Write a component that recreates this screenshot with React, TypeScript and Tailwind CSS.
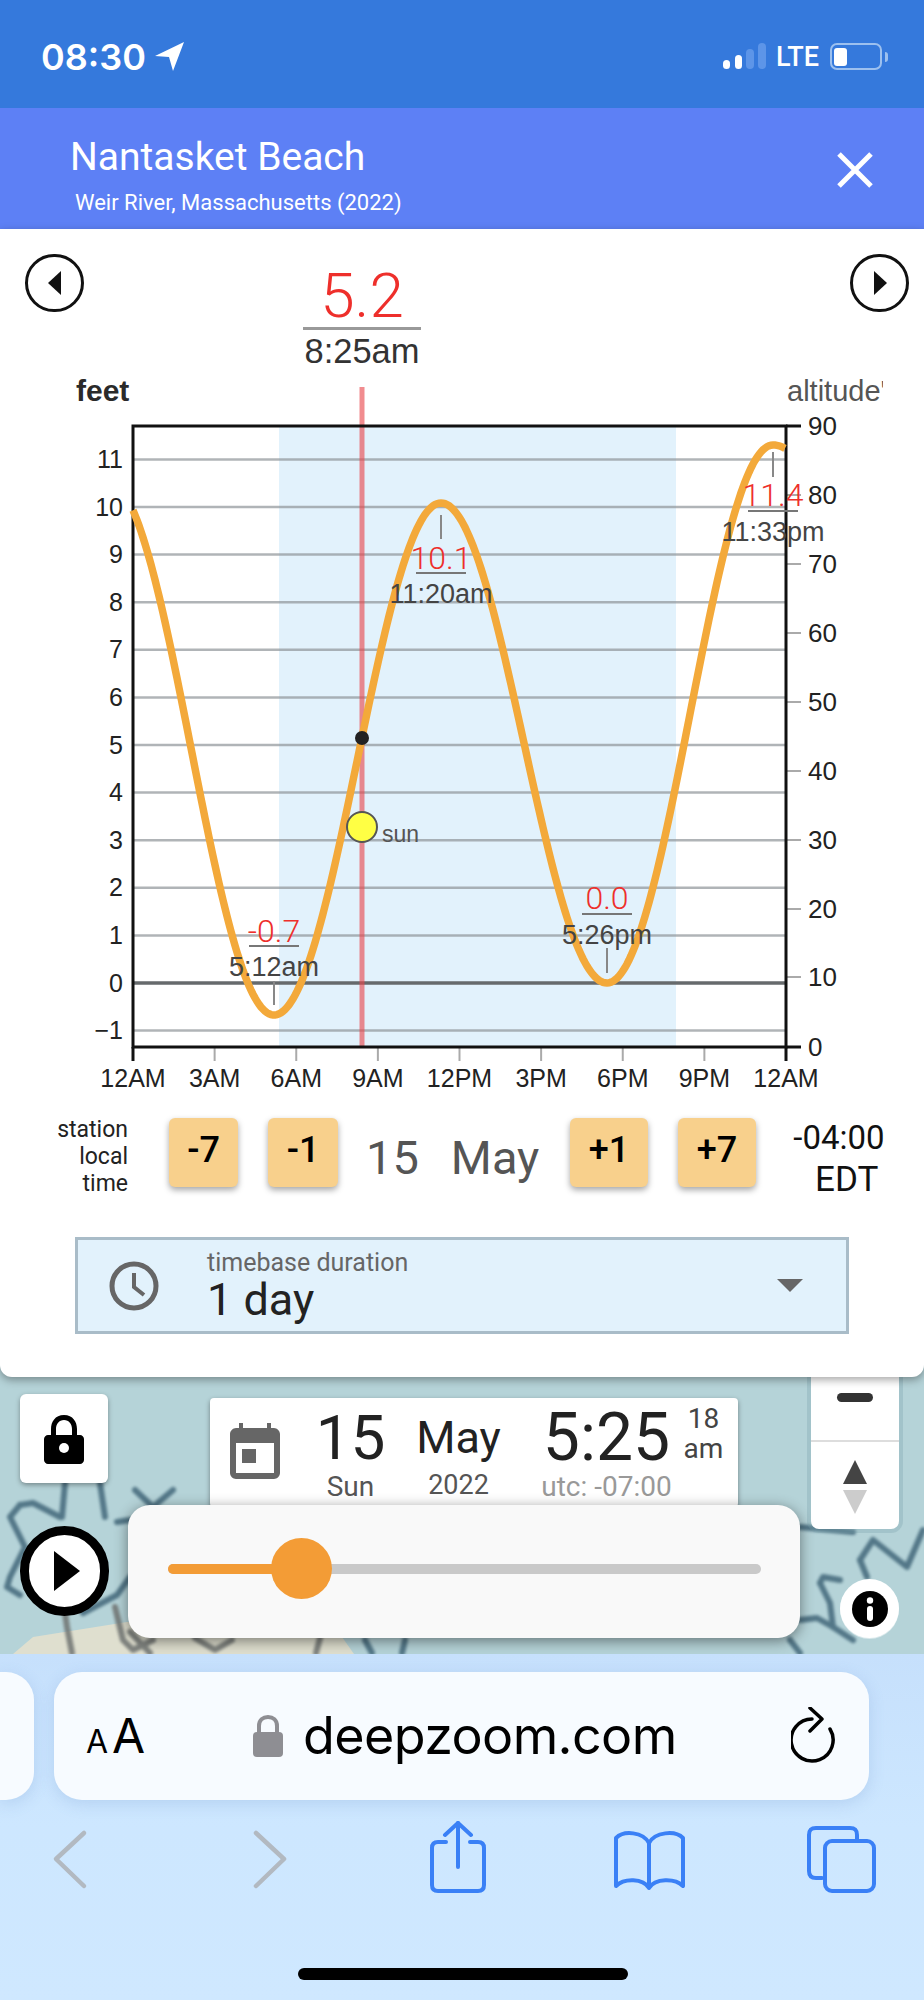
const PLOT = { left: 133, right: 786, top: 426, bottom: 1047 };
const feetY = (v: number) => 983 - 47.6 * v;
const hourX = (h: number) => PLOT.left + (h * (PLOT.right - PLOT.left)) / 24;

// tide extremes in page pixels, the curve is a cosine between each pair
const extremes: [number, number][] = [
  [108, 481],
  [274, 1015],
  [441, 503],
  [607, 983],
  [773, 445],
  [939, 700],
];

function tidePath() {
  const pts: string[] = [];
  for (let x = PLOT.left; x <= PLOT.right; x += 2) {
    const i = extremes.findIndex((e, n) => x >= e[0] && x < extremes[n + 1][0]);
    const [x0, y0] = extremes[i];
    const [x1, y1] = extremes[i + 1];
    const f = (1 - Math.cos((Math.PI * (x - x0)) / (x1 - x0))) / 2;
    pts.push(`${x},${(y0 + (y1 - y0) * f).toFixed(1)}`);
  }
  return `M${pts.join(' L')}`;
}

const feetLabels = [11, 10, 9, 8, 7, 6, 5, 4, 3, 2, 1, 0, -1];
const altLabels = [
  [90, 426],
  [80, 495],
  [70, 564],
  [60, 633],
  [50, 702],
  [40, 771],
  [30, 840],
  [20, 909],
  [10, 977],
  [0, 1047],
];
const timeLabels = ['12AM', '3AM', '6AM', '9AM', '12PM', '3PM', '6PM', '9PM', '12AM'];

const tideLabels = [
  { x: 274, value: '-0.7', time: '5:12am', red: 942, rule: 946, clock: 976, t0: 981, t1: 1005 },
  { x: 441, value: '10.1', time: '11:20am', red: 569, rule: 573, clock: 603, t0: 515, t1: 539 },
  { x: 607, value: '0.0', time: '5:26pm', red: 909, rule: 914, clock: 944, t0: 948, t1: 973 },
  { x: 773, value: '11.4', time: '11:33pm', red: 506, rule: 511, clock: 541, t0: 452, t1: 477 },
];

function TideChart() {
  return (
    <svg viewBox="0 374 924 726" width="924" height="726" className="block font-['Liberation_Sans',sans-serif]">
      <defs>
        <clipPath id="alt-clip">
          <rect x="780" y="374" width="103" height="40" />
        </clipPath>
      </defs>

      <rect x="279" y={PLOT.top} width="397" height={PLOT.bottom - PLOT.top} fill="#e2f2fc" />

      {feetLabels.map((v) => (
        <line
          key={v}
          x1={PLOT.left}
          x2={PLOT.right}
          y1={feetY(v)}
          y2={feetY(v)}
          stroke={v === 0 ? '#666a6c' : '#8f9498'}
          strokeOpacity={v === 0 ? 1 : 0.7}
          strokeWidth={v === 0 ? 3.5 : 2.5}
        />
      ))}

      <line x1="362" x2="362" y1="387" y2={PLOT.bottom} stroke="#e8454a" strokeOpacity="0.62" strokeWidth="5" />

      {timeLabels.map((t, i) => (
        <g key={i}>
          <line
            x1={hourX(i * 3)}
            x2={hourX(i * 3)}
            y1={PLOT.bottom}
            y2={1061}
            stroke={i === 0 || i === 8 ? '#111' : '#aaa'}
            strokeWidth={i === 0 || i === 8 ? 3 : 2}
          />
          <text x={hourX(i * 3)} y="1087" textAnchor="middle" fontSize="25" fill="#222">
            {t}
          </text>
        </g>
      ))}

      {altLabels.map(([v, y]) => (
        <g key={v}>
          <line
            x1={PLOT.right}
            x2="801"
            y1={y}
            y2={y}
            stroke={v === 90 || v === 0 ? '#111' : '#aaa'}
            strokeWidth={v === 90 || v === 0 ? 3 : 2}
          />
          <text x="808" y={y + 9} fontSize="26" fill="#222">
            {v}
          </text>
        </g>
      ))}

      <rect x={PLOT.left} y={PLOT.top} width={PLOT.right - PLOT.left} height={PLOT.bottom - PLOT.top} fill="none" stroke="#111" strokeWidth="3" />

      {feetLabels.map((v) => (
        <text key={v} x="123" y={feetY(v) + 8.5} textAnchor="end" fontSize="25" fill="#222">
          {v < 0 ? `\u2212${-v}` : v}
        </text>
      ))}

      <text x="76" y="401" fontSize="30" fontWeight="700" fill="#2a2a2a">
        feet
      </text>
      <text x="787" y="401" fontSize="29" fill="#555" clipPath="url(#alt-clip)">
        altitude'
      </text>

      <path d={tidePath()} fill="none" stroke="#f3a93a" strokeWidth="7.5" />

      {tideLabels.map((l) => (
        <g key={l.value} textAnchor="middle">
          <line x1={l.x} x2={l.x} y1={l.t0} y2={l.t1} stroke="#888" strokeWidth="2" />
          <text x={l.x} y={l.red} fontSize="32" fontWeight="300" fill="#ee2f2b" className="font-['Roboto',sans-serif]">
            {l.value}
          </text>
          <line x1={l.x - 25} x2={l.x + 25} y1={l.rule} y2={l.rule} stroke="#777" strokeWidth="2" />
          <text x={l.x} y={l.clock} fontSize="27" fill="#444">
            {l.time}
          </text>
        </g>
      ))}

      <circle cx="362" cy="738" r="7" fill="#222" />
      <circle cx="362" cy="827" r="15" fill="#ffff44" stroke="#555" strokeWidth="2" />
      <text x="382" y="842" fontSize="23" fill="#555">
        sun
      </text>
    </svg>
  );
}

function NavButton({ dir }: { dir: 'left' | 'right' }) {
  return (
    <button className="flex h-[58px] w-[59px] items-center justify-center rounded-full border-[3px] border-[#111] bg-white">
      <svg width="14" height="24" viewBox="0 0 14 24">
        <path d={dir === 'left' ? 'M13 0 L13 24 L0 12 Z' : 'M1 0 L1 24 L14 12 Z'} fill="#111" />
      </svg>
    </button>
  );
}

function StepButton({ label, width, gap }: { label: string; width: string; gap: string }) {
  return (
    <button
      className={`${width} ${gap} flex h-[69px] shrink-0 items-center justify-center rounded-md bg-[#f8d08c] pb-[6px] text-[36px] font-medium text-black shadow-[0_3px_6px_rgba(0,0,0,0.35)]`}
    >
      {label}
    </button>
  );
}

function MapBackdrop() {
  const blue = [
    'M65 1483 L62 1517',
    'M20 1505 L33 1503 L60 1517',
    'M20 1505 L10 1517 L25 1547 L10 1577 L7 1587 L20 1595',
    'M100 1483 L105 1517',
    'M135 1490 L153 1507 L173 1490',
    'M117 1522 L130 1520',
    'M83 1613 L117 1595 L130 1577',
    'M800 1527 L853 1532',
    'M860 1560 L873 1540 L907 1567 L923 1530',
    'M860 1560 L867 1577',
    'M820 1583 L823 1577 L840 1580',
    'M820 1583 L830 1603 L833 1627 L853 1640',
    'M800 1620 L817 1618 L833 1627',
    'M790 1640 L800 1653',
    'M365 1640 L372 1653',
    'M405 1640 L402 1653',
  ];
  const grey = [
    'M65 1613 L67 1627 L72 1653',
    'M115 1607 L123 1640 L133 1650 L153 1640',
    'M130 1632 L150 1653',
    'M195 1638 L215 1650 L232 1640',
    'M320 1638 L316 1653',
  ];
  return (
    <svg viewBox="0 1365 924 289" className="absolute inset-0 h-full w-full">
      <rect x="0" y="1365" width="924" height="289" fill="#b5d3d8" />
      <path d="M13 1654 L33 1637 L127 1622 L330 1620 L354 1654 Z" fill="#dfdfcf" />
      <g fill="none" strokeWidth="6" strokeLinejoin="round" strokeLinecap="round" opacity="0.85" className="blur-[1.5px]">
        {blue.map((d) => (
          <path key={d} d={d} stroke="#42677a" />
        ))}
        {grey.map((d) => (
          <path key={d} d={d} stroke="#6f7371" />
        ))}
      </g>
    </svg>
  );
}

function MapOverlays() {
  return (
    <>
      <div className="absolute left-[20px] top-[29px] flex h-[89px] w-[88px] items-center justify-center rounded-md bg-white shadow-[0_2px_5px_rgba(0,0,0,0.35)]">
        <svg width="40" height="52" viewBox="0 0 40 52">
          <path
            d="M20 2 C11 2 7 9 7 16 V22 H4 C2 22 0 24 0 26 V47 C0 49 2 51 4 51 H36 C38 51 40 49 40 47 V26 C40 24 38 22 36 22 H33 V16 C33 9 29 2 20 2 Z M12 22 V16 C12 11 15 7 20 7 C25 7 28 11 28 16 V22 Z"
            fill="#000"
            fillRule="evenodd"
          />
          <circle cx="20" cy="35" r="5" fill="#fff" />
        </svg>
      </div>

      <div className="absolute left-[210px] top-[33px] flex h-[109px] w-[528px] rounded bg-white shadow-[0_2px_5px_rgba(0,0,0,0.4)]">
        <svg width="50" height="56" viewBox="0 0 50 56" className="ml-[20px] mt-[25px] shrink-0">
          <path
            d="M9 0 H13 V5 H37 V0 H41 V5 H44 C47 5 50 8 50 11 V50 C50 53 47 56 44 56 H6 C3 56 0 53 0 50 V11 C0 8 3 5 6 5 H9 Z M6 20 V50 H44 V20 Z"
            fill="#666"
            fillRule="evenodd"
          />
          <rect x="12" y="26" width="14" height="14" fill="#666" />
        </svg>
        <div className="ml-[38px] flex w-[65px] flex-col items-center">
          <span className="mt-[10px] text-[62px] leading-[60px] text-[#222]">15</span>
          <span className="mt-[3px] text-[28px] leading-[32px] text-[#555]">Sun</span>
        </div>
        <div className="ml-[33px] flex w-[85px] flex-col items-center">
          <span className="mt-[15px] text-[45px] leading-[50px] text-[#222]">May</span>
          <span className="mt-[6px] text-[27px] leading-[32px] text-[#555]">2022</span>
        </div>
        <div className="ml-[40px] flex w-[131px] flex-col items-center">
          <span className="mt-[10px] text-[66px] leading-[60px] text-[#222]">5:25</span>
          <span className="mt-[3px] whitespace-nowrap text-[28px] leading-[32px] text-[#999]">utc: -07:00</span>
        </div>
        <div className="ml-[13px] flex w-[37px] flex-col items-center text-[28px] leading-[30px] text-[#444]">
          <span className="mt-[6px]">18</span>
          <span>am</span>
        </div>
      </div>

      <div className="absolute left-[811px] top-0 flex h-[164px] w-[88px] flex-col rounded-b-lg bg-white shadow-[0_0_0_4px_rgba(120,160,170,0.3)]">
        <div className="flex h-[77px] items-start justify-center border-b-2 border-[#ddd] pt-[28px]">
          <div className="h-[9px] w-[36px] rounded-full bg-[#333]" />
        </div>
        <svg width="24" height="54" viewBox="0 0 24 54" className="ml-[32px] mt-[18px]">
          <path d="M12 0 L24 24 L0 24 Z" fill="#444" />
          <path d="M0 30 L24 30 L12 54 Z" fill="#ccc" />
        </svg>
      </div>

      <button className="absolute left-[20px] top-[161px] flex h-[90px] w-[89px] items-center justify-center rounded-full border-[9px] border-black bg-white">
        <svg width="26" height="40" viewBox="0 0 26 40" className="ml-[4px]">
          <path d="M0 0 L26 20 L0 40 Z" fill="#000" />
        </svg>
      </button>

      <div className="absolute left-[128px] top-[140px] h-[133px] w-[672px] rounded-[22px] bg-[#f9f9f9] shadow-[0_3px_14px_rgba(0,0,0,0.45)]">
        <div className="ml-[40px] mt-[59px] h-[10px] w-[593px] rounded-full bg-[#c9c9c9]">
          <div className="h-full w-[133px] rounded-full bg-[#f39c36]" />
        </div>
        <div className="absolute left-[143px] top-[33px] h-[61px] w-[61px] rounded-full bg-[#f39c36]" />
      </div>

      <div className="absolute left-[840px] top-[214px] flex h-[59px] w-[59px] items-center justify-center rounded-full bg-white shadow-[0_1px_0_rgba(255,255,255,0.5)]">
        <svg width="36" height="36" viewBox="0 0 36 36">
          <circle cx="18" cy="18" r="18" fill="#000" />
          <circle cx="18" cy="9.5" r="3.2" fill="#fff" />
          <rect x="15" y="15" width="6" height="15" rx="3" fill="#fff" />
        </svg>
      </div>
    </>
  );
}

function BrowserChrome() {
  return (
    <div className="relative h-[346px] bg-gradient-to-b from-[#c6e0fc] via-[#cde7ff] to-[#cfe8ff] font-['Inter',sans-serif]">
      <div className="flex pt-[18px]">
        <div className="h-[128px] w-[34px] rounded-r-[28px] bg-[#f7fbff] shadow-[0_4px_16px_rgba(90,130,190,0.2)]" />
        <div className="relative ml-[20px] flex h-[128px] w-[815px] items-center rounded-[28px] bg-[#f7fbff] shadow-[0_4px_16px_rgba(90,130,190,0.2)]">
          <div className="ml-[32px] flex w-[60px] items-baseline text-black">
            <span className="text-[32px] leading-none">A</span>
            <span className="ml-[4px] text-[48px] leading-none">A</span>
          </div>
          <svg width="30" height="42" viewBox="0 0 30 42" className="ml-[107px] shrink-0">
            <path d="M6 18 V11 C6 5 10 2 15 2 C20 2 24 5 24 11 V18" fill="none" stroke="#8e8e93" strokeWidth="4" />
            <rect x="0" y="17" width="30" height="25" rx="4" fill="#8e8e93" />
          </svg>
          <span className="ml-[20px] text-[52px] leading-none tracking-[-0.6px] text-black">deepzoom.com</span>
          <svg width="44" height="58" viewBox="0 0 44 58" className="absolute left-[737px] top-[35px]" fill="none" stroke="#000" strokeWidth="3.5" strokeLinecap="round" strokeLinejoin="round">
            <path d="M39 22 A21 21 0 1 1 21 12" />
            <path d="M19 1 L31 12 L19 24" />
          </svg>
        </div>
      </div>
      <div className="relative mt-[21px] h-[80px]">
        <svg viewBox="0 1821 924 80" width="924" height="80" className="block" fill="none" strokeLinecap="round" strokeLinejoin="round">
          <path d="M84 1833 L56 1859 L84 1886" stroke="#b2b9c1" strokeWidth="4.5" />
          <path d="M256 1833 L284 1859 L256 1886" stroke="#b2b9c1" strokeWidth="4.5" />
          <g stroke="#3a80f6" strokeWidth="4">
            <path d="M446 1842 H438 C434 1842 432 1844 432 1848 V1885 C432 1889 434 1891 438 1891 H478 C482 1891 484 1889 484 1885 V1848 C484 1844 482 1842 478 1842 H470" />
            <path d="M458 1823 V1867" />
            <path d="M445 1835 L458 1823 L471 1835" />
            <path d="M649 1843 C643 1832 624 1830 616 1838 V1886 C624 1878 643 1878 649 1888 C655 1878 675 1878 683 1886 V1838 C675 1830 655 1832 649 1843 Z M649 1843 V1888" />
            <path d="M822 1878 H816 C811 1878 809 1875 809 1871 V1835 C809 1830 811 1828 816 1828 H850 C855 1828 857 1830 857 1835 V1841" />
            <rect x="825" y="1841" width="49" height="50" rx="7" />
          </g>
        </svg>
      </div>
      <div className="absolute left-[298px] top-[314px] h-[12px] w-[330px] rounded-full bg-black" />
    </div>
  );
}

export default function App() {
  return (
    <div className="w-[924px] overflow-hidden bg-white font-['Roboto',sans-serif]">
      <div className="flex h-[108px] items-start bg-[#3579dc] text-white">
        <span className="ml-[41px] mt-[35px] font-['Inter',sans-serif] text-[36px] font-semibold leading-[44px]">08:30</span>
        <svg width="30" height="29" viewBox="0 0 30 29" className="ml-[9px] mt-[42px]">
          <path d="M29 0 L0 14 L14 15 L18 29 Z" fill="#fff" />
        </svg>
        <div className="ml-auto mt-[43px] flex h-[26px] items-end">
          <div className="h-[9px] w-[7px] rounded-sm bg-white" />
          <div className="ml-[5px] h-[14px] w-[7px] rounded-sm bg-white" />
          <div className="ml-[4px] h-[20px] w-[8px] rounded-sm bg-[#5d95e8]" />
          <div className="ml-[4px] h-[26px] w-[8px] rounded-sm bg-[#5d95e8]" />
        </div>
        <span className="ml-[10px] mt-[41px] text-[27px] font-medium leading-[32px]">LTE</span>
        <div className="ml-[11px] mt-[43px] flex h-[27px] w-[52px] items-center rounded-[7px] border-2 border-[#9cc0ef] px-[2px]">
          <div className="h-[18px] w-[13px] rounded-[3px] bg-white" />
        </div>
        <div className="ml-[3px] mt-[52px] h-[10px] w-[3px] rounded-r-sm bg-[#9cc0ef]" />
        <div className="w-[36px]" />
      </div>

      <div className="relative h-[121px] bg-[#5d80f5] text-white">
        <div className="pl-[70px] pt-[26px] text-[39px] leading-[46px]">Nantasket Beach</div>
        <div className="pl-[75px] pt-[10px] text-[22px] leading-[26px]">Weir River, Massachusetts (2022)</div>
        <svg width="36" height="36" viewBox="0 0 36 36" className="absolute right-[51px] top-[44px]">
          <path d="M2 2 L34 34 M34 2 L2 34" stroke="#fff" strokeWidth="5" />
        </svg>
      </div>

      <div className="relative z-10 h-[1148px] rounded-b-xl bg-white shadow-[0_3px_8px_rgba(0,0,0,0.35)]">
        <div className="flex h-[145px] items-start pl-[25px] pr-[15px] pt-[25px]">
          <NavButton dir="left" />
          <div className="ml-[198px] mt-[11px] flex w-[160px] flex-col items-center">
            <span className="text-[62px] font-light leading-[62px] text-[#ee2f2b]">5.2</span>
            <div className="h-[3px] w-[118px] bg-[#999]" />
            <span className="mt-[3px] font-['Liberation_Sans',sans-serif] text-[34.5px] leading-[36px] text-[#333]">8:25am</span>
          </div>
          <div className="ml-auto">
            <NavButton dir="right" />
          </div>
        </div>

        <TideChart />

        <div className="mt-[18px] flex h-[69px] items-center">
          <div className="w-[128px] shrink-0 pt-[8px] text-right text-[23px] leading-[27px] text-[#222]">
            <div>station</div>
            <div>local</div>
            <div>time</div>
          </div>
          <StepButton label="-7" width="w-[69px]" gap="ml-[41px]" />
          <StepButton label="-1" width="w-[70px]" gap="ml-[30px]" />
          <div className="ml-[28px] flex w-[204px] shrink-0 pt-[10px] text-[47px] leading-[50px] text-[#555]">
            <span>15</span>
            <span className="ml-[32px]">May</span>
          </div>
          <StepButton label="+1" width="w-[78px]" gap="" />
          <StepButton label="+7" width="w-[78px]" gap="ml-[30px]" />
          <div className="ml-[36px] flex w-[94px] flex-col pt-[12px] text-[33px] leading-[42px] text-[#111]">
            <span className="self-center">-04:00</span>
            <span className="ml-[23px] text-[35px]">EDT</span>
          </div>
        </div>

        <div className="ml-[75px] mt-[50px] flex h-[97px] w-[774px] items-center border-[3px] border-[#a9bcc8] bg-[#e2f2fc]">
          <svg width="50" height="50" viewBox="0 0 50 50" className="ml-[31px] shrink-0" fill="none" stroke="#666" strokeWidth="5">
            <circle cx="25" cy="25" r="22" />
            <path d="M25 12 V26 L35 34" strokeWidth="4" />
          </svg>
          <div className="ml-[48px] flex flex-col">
            <span className="text-[25px] leading-[28px] text-[#666]">timebase duration</span>
            <span className="text-[45px] leading-[46px] text-[#222]">1 day</span>
          </div>
          <svg width="26" height="13" viewBox="0 0 26 13" className="ml-auto mr-[43px]">
            <path d="M0 0 H26 L13 13 Z" fill="#666" />
          </svg>
        </div>
      </div>

      <div className="relative -mt-[12px] h-[289px] overflow-hidden">
        <MapBackdrop />
        <MapOverlays />
      </div>

      <BrowserChrome />
    </div>
  );
}
